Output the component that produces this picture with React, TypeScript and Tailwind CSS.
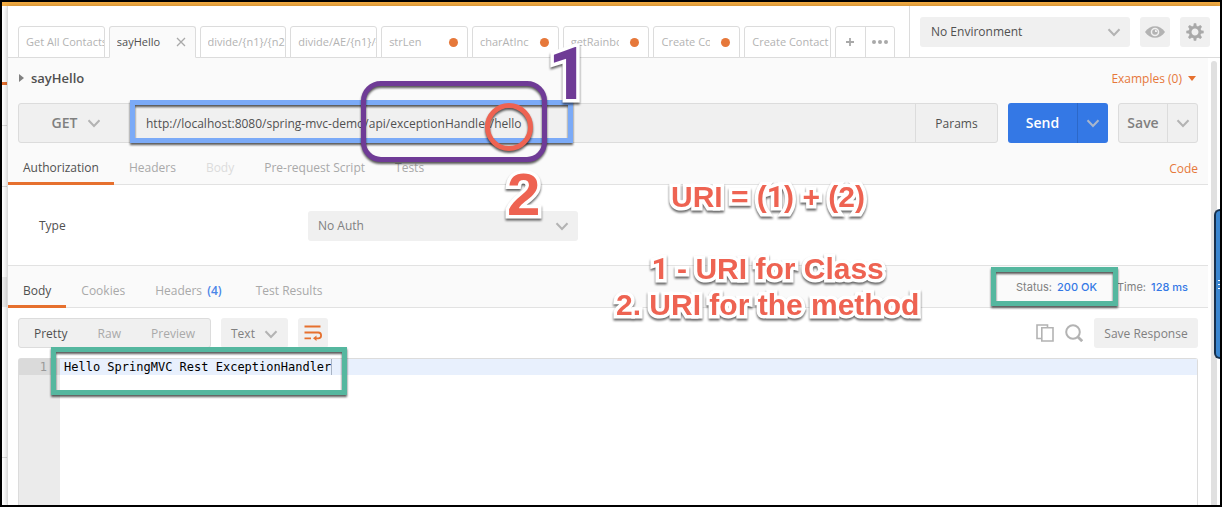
import type { ReactNode } from "react";

type RequestTab = { title: string; state?: "active" | "unsaved" };

const requestTabs: RequestTab[] = [
  { title: "Get All Contacts" },
  { title: "sayHello", state: "active" },
  { title: "divide/{n1}/{n2}" },
  { title: "divide/AE/{n1}/{n2}" },
  { title: "strLen", state: "unsaved" },
  { title: "charAtIncludes", state: "unsaved" },
  { title: "getRainbow", state: "unsaved" },
  { title: "Create Contact", state: "unsaved" },
  { title: "Create Contact" },
];

function Chevron({ className = "" }: { className?: string }) {
  return (
    <svg viewBox="0 0 14 9" className={`h-[9px] w-[14px] shrink-0 fill-none ${className}`} stroke="currentColor" strokeWidth="2" aria-hidden="true">
      <path d="M1.5 1.2 7 7l5.500-5.800" />
    </svg>
  );
}

function EyeIcon() {
  return (
    <svg viewBox="0 0 20 12" className="h-3 w-5" aria-hidden="true">
      <path d="M0 6C2.500 2.200 6 .2 10 .2S17.500 2.200 20 6c-2.500 3.800-6 5.800-10 5.800S2.500 9.800 0 6Z" fill="#b3b3b3" />
      <circle cx="10" cy="6" r="4.300" fill="#f0f0f0" />
      <circle cx="10" cy="6" r="2.800" fill="#b3b3b3" />
      <path d="M10 6V3.800A2.200 2.200 0 0 1 12.200 6Z" fill="#f0f0f0" />
    </svg>
  );
}

function GearIcon() {
  const teeth = [0, 45, 90, 135, 180, 225, 270, 315];
  return (
    <svg viewBox="-9 -9 18 18" className="size-[18px]" aria-hidden="true">
      <circle r="4.900" fill="none" stroke="#a9a9a9" strokeWidth="2.800" />
      {teeth.map((a) => (
        <path key={a} d="M-1.800-5.500-1.200-8.700H1.200L1.800-5.500Z" fill="#a9a9a9" transform={`rotate(${a})`} />
      ))}
    </svg>
  );
}

function TabItem({ title, state }: RequestTab) {
  const active = state === "active";
  return (
    <div
      className={`flex min-w-0 flex-1 items-center overflow-hidden rounded-t-[3px] border border-[#dcdcdc] pl-[7px] text-[11px] ${
        active ? "border-b-[#fafafa] bg-[#fafafa] text-[#505050]" : "bg-white text-[#b3b3b3]"
      }`}
    >
      <button type="button" className="min-w-0 flex-1 overflow-hidden text-left whitespace-nowrap">
        {title}
      </button>
      {active && (
        <button type="button" aria-label="Close tab" className="mr-[9px] ml-1">
          <svg viewBox="0 0 10 10" className="size-[10px]" stroke="#a9a9a9" strokeWidth="1.300" aria-hidden="true">
            <path d="m1 1 8 8M9 1 1 9" />
          </svg>
        </button>
      )}
      {state === "unsaved" && <span className="mr-[9px] ml-[11px] size-[9px] shrink-0 rounded-full bg-[#e6783a]" />}
    </div>
  );
}

function PanelTab({ children, active, faded }: { children: ReactNode; active?: boolean; faded?: boolean }) {
  return (
    <button
      type="button"
      className={`h-[42px] border-b-[3px] px-[15px] pt-[11px] text-xs ${
        active ? "border-[#e6702e] text-[#505050]" : faded ? "border-transparent text-[#dcdcdc]" : "border-transparent text-[#a9a9a9]"
      }`}
    >
      {children}
    </button>
  );
}

function Callout({ children, className }: { children: ReactNode; className: string }) {
  return (
    <div
      className={`pointer-events-none absolute text-center font-bold whitespace-nowrap drop-shadow-[0_2px_1px_rgba(0,0,0,0.6)] [-webkit-text-stroke:7px_white] [paint-order:stroke_fill] [stroke-linejoin:round] ${className}`}
    >
      {children}
    </div>
  );
}

export default function App() {
  return (
    <div className="relative flex min-h-screen flex-col overflow-hidden border-2 border-black bg-white font-['Open_Sans',sans-serif] text-xs text-[#505050]">
      <div className="h-1 shrink-0 bg-[#f5ad42]" />
      <div className="flex flex-1">
        {/* Edge of the collapsed sidebar */}
        <div className="flex w-[5px] shrink-0 flex-col">
          <div className="h-[79px] border-b-[3px] border-[#e6702e]" />
          <div className="h-[41px] border-b border-[#dcdcdc]" />
          <div className="h-[61px] border-b border-[#dcdcdc]" />
          <div className="mt-[90px] h-[30px] bg-[#ececec]" />
          <div className="h-[151px] border-b border-[#dcdcdc]" />
        </div>

        <div className="z-10 flex min-w-0 flex-1 flex-col border-l border-[#dcdcdc] bg-white shadow-[0_0_5px_rgba(0,0,0,0.25)]">
          <header className="flex h-[52px] shrink-0 border-b border-[#dcdcdc]">
            <nav className="-mb-px flex min-w-0 flex-1 gap-1 pt-5 pr-[14px] pl-[10px]">
              {requestTabs.map((t, i) => (
                <TabItem key={i} {...t} />
              ))}
              <div className="flex w-[60px] shrink-0 rounded-t-[3px] border border-[#dcdcdc]">
                <button type="button" aria-label="New tab" className="flex flex-1 items-center justify-center border-r border-[#dcdcdc]">
                  <svg viewBox="0 0 8 8" className="size-2" stroke="#a9a9a9" strokeWidth="1.800" aria-hidden="true">
                    <path d="M4 0v8M0 4h8" />
                  </svg>
                </button>
                <button type="button" aria-label="More tabs" className="flex flex-1 items-center justify-center gap-[2px]">
                  <span className="size-1 rounded-full bg-[#a9a9a9]" />
                  <span className="size-1 rounded-full bg-[#a9a9a9]" />
                  <span className="size-1 rounded-full bg-[#a9a9a9]" />
                </button>
              </div>
            </nav>
            <div className="flex w-[311px] shrink-0 items-start gap-[10px] border-l border-[#dcdcdc] pt-[11px] pr-[10px] pl-[10px]">
              <label className="relative flex h-[30px] flex-1 items-center">
                <span className="sr-only">Environment</span>
                <select className="size-full appearance-none rounded-[3px] bg-[#f0f0f0] px-[11px] text-xs text-[#505050]">
                  <option>No Environment</option>
                </select>
                <Chevron className="pointer-events-none absolute right-[9px] text-[#b3b3b3]" />
              </label>
              <button type="button" aria-label="Environment quick look" className="flex size-[30px] items-center justify-center rounded-[3px] bg-[#f0f0f0]">
                <EyeIcon />
              </button>
              <button type="button" aria-label="Manage environments" className="flex size-[30px] items-center justify-center rounded-[3px] bg-[#f0f0f0]">
                <GearIcon />
              </button>
            </div>
          </header>

          <div className="flex min-h-0 flex-1">
            <main className="flex min-w-0 flex-1 flex-col">
              <section className="border-b border-[#e2e2e2] bg-[#fafafa]">
                <div className="flex h-[45px] items-center justify-between pr-3 pb-1 pl-[11px]">
                  <h1 className="flex items-center gap-[7px] text-[13px] font-semibold">
                    <svg viewBox="0 0 5 8" className="h-2 w-[5px] fill-[#808080]" aria-hidden="true">
                      <path d="M0 0 5 4 0 8Z" />
                    </svg>
                    sayHello
                  </h1>
                  <button type="button" className="flex items-center gap-[6px] text-[#e6783a]">
                    Examples (0)
                    <svg viewBox="0 0 8 5" className="h-[5px] w-2 fill-[#e6702e]" aria-hidden="true">
                      <path d="M0 0H8L4 5Z" />
                    </svg>
                  </button>
                </div>
                <div className="flex h-10 gap-[10px] px-[10px]">
                  <div className="flex min-w-0 flex-1 overflow-hidden rounded-[3px] border border-[#dcdcdc] bg-[#f0f0f0]">
                    <button type="button" className="flex w-[112px] shrink-0 items-center justify-center gap-[10px] border-r border-[#dcdcdc] pl-1 text-sm font-semibold text-[#808080]">
                      GET
                      <Chevron className="text-[#b3b3b3]" />
                    </button>
                    <input
                      type="text"
                      aria-label="Request URL"
                      defaultValue="http://localhost:8080/spring-mvc-demo/api/exceptionHandler/hello"
                      className="min-w-0 flex-1 bg-transparent px-[15px] pt-[2px] text-xs text-[#505050] outline-none"
                    />
                    <button type="button" className="w-[82px] shrink-0 border-l border-[#dcdcdc] pt-[2px]">
                      Params
                    </button>
                  </div>
                  <div className="flex w-[100px] shrink-0 rounded-[3px] bg-[#3478e5] text-white">
                    <button type="button" className="flex-1 text-sm font-semibold">
                      Send
                    </button>
                    <button type="button" aria-label="Send options" className="flex w-[31px] items-center justify-center border-l border-[#2c68c8] text-[#a9b6cc]">
                      <Chevron className="w-3" />
                    </button>
                  </div>
                  <div className="flex w-20 shrink-0 rounded-[3px] border border-[#dcdcdc] bg-[#f0f0f0]">
                    <button type="button" className="flex-1 text-sm font-semibold text-[#808080]">
                      Save
                    </button>
                    <button type="button" aria-label="Save options" className="flex w-[30px] items-center justify-center border-l border-[#dcdcdc] text-[#b3b3b3]">
                      <Chevron className="w-3" />
                    </button>
                  </div>
                </div>
                <div className="flex items-end justify-between pr-[10px]">
                  <div className="-mb-px flex">
                    <PanelTab active>Authorization</PanelTab>
                    <PanelTab>Headers</PanelTab>
                    <PanelTab faded>Body</PanelTab>
                    <PanelTab>Pre-request Script</PanelTab>
                    <PanelTab>Tests</PanelTab>
                  </div>
                  <a href="#code" className="pb-[7px] text-[#e6783a]">
                    Code
                  </a>
                </div>
              </section>

              <section className="flex h-20 items-center pt-[2px] pl-[31px]">
                <label htmlFor="auth-type" className="w-[269px]">
                  Type
                </label>
                <div className="relative flex h-[30px] w-[270px] items-center">
                  <select id="auth-type" className="size-full appearance-none rounded-[3px] bg-[#f0f0f0] px-[10px] text-xs text-[#808080]">
                    <option>No Auth</option>
                  </select>
                  <Chevron className="pointer-events-none absolute right-[9px] text-[#b3b3b3]" />
                </div>
              </section>

              <section className="flex h-[43px] items-center justify-between border-y border-[#e2e2e2] bg-[#fafafa] pr-5">
                <div className="flex">
                  <PanelTab active>Body</PanelTab>
                  <PanelTab>Cookies</PanelTab>
                  <PanelTab>
                    Headers <span className="mr-1 ml-[2px] font-semibold text-[#4a86e8]">(4)</span>
                  </PanelTab>
                  <PanelTab>Test Results</PanelTab>
                </div>
                <div className="flex gap-5 pt-[2px] font-['Inter',sans-serif] text-[11px] text-[#808080]">
                  <span>
                    Status: <span className="ml-[2px] font-medium text-[#3478e5]">200 OK</span>
                  </span>
                  <span>
                    Time: <span className="ml-[2px] font-medium text-[#3478e5]">128 ms</span>
                  </span>
                </div>
              </section>

              <section className="flex flex-1 flex-col bg-white px-[10px] pt-[10px]">
                <div className="flex h-[30px] items-stretch gap-[10px]">
                  <div className="flex w-[193px] justify-between rounded-[3px] border border-[#dcdcdc] bg-[#f0f0f0] px-[15px] pt-[2px] text-[#a9a9a9]">
                    <button type="button" className="text-[#505050]">
                      Pretty
                    </button>
                    <button type="button">Raw</button>
                    <button type="button">Preview</button>
                  </div>
                  <button type="button" className="flex w-[67px] items-center justify-between rounded-[3px] bg-[#f0f0f0] px-[10px] pt-[2px] text-[#808080]">
                    Text
                    <Chevron className="text-[#b3b3b3]" />
                  </button>
                  <button type="button" aria-label="Wrap lines" className="flex w-[30px] items-center justify-center rounded-[3px] bg-[#f0f0f0]">
                    <svg viewBox="0 0 18 16" className="h-4 w-[18px] fill-none" stroke="#e6702e" strokeWidth="1.800" aria-hidden="true">
                      <path d="M.5 1.500h16M.5 7.500H14.200a2.900 2.900 0 0 1 0 5.800H11M.5 13.300H7" />
                      <path d="M12.500 10.600v5.400L9 13.300Z" fill="#e6702e" stroke="none" />
                    </svg>
                  </button>
                  <div className="ml-auto flex items-center gap-[11px]">
                    <button type="button" aria-label="Copy response">
                      <svg viewBox="0 0 18 18" className="block size-[18px] fill-none" stroke="#b3b3b3" strokeWidth="1.600" aria-hidden="true">
                        <path d="M5 14.500H1V1h10.500v2.500" />
                        <path d="M5.800 3.800H17V17H5.800Z" />
                      </svg>
                    </button>
                    <button type="button" aria-label="Search response">
                      <svg viewBox="0 0 18 18" className="block size-[18px] fill-none" stroke="#b3b3b3" strokeWidth="2" aria-hidden="true">
                        <circle cx="8" cy="8" r="6.800" />
                        <path d="m12.700 12.700 4.500 4.500" strokeWidth="2.800" />
                      </svg>
                    </button>
                    <button type="button" className="h-[30px] w-[104px] rounded-[3px] bg-[#f0f0f0] pt-[2px] text-[#808080]">
                      Save Response
                    </button>
                  </div>
                </div>

                <div className="mt-[10px] flex flex-1 rounded-t-[3px] border border-b-0 border-[#dcdcdc] font-['DejaVu_Sans_Mono',monospace] text-xs leading-4">
                  <div className="w-[41px] bg-[#ebebeb] text-right text-[#999999]">
                    <div className="bg-[#dadada] pr-[13px]">1</div>
                  </div>
                  <div className="flex-1 text-black">
                    <div className="flex bg-[#e8f0fd] pl-1">
                      Hello SpringMVC Rest ExceptionHandler
                      <span className="w-px bg-[#a9b4c4]" />
                    </div>
                  </div>
                </div>
              </section>
            </main>
            <div className="w-3 shrink-0 bg-white pt-[3px] pl-[3px]">
              <div className="h-full w-[6px] rounded-t-full bg-[#e0e0e0]" />
            </div>
          </div>
        </div>
      </div>

      <div className="absolute top-[207px] right-0 z-20 flex h-[150px] w-[6px] flex-col justify-center gap-[3px] rounded-l-[6px] border-2 border-r-0 border-[#16304d] bg-[#3a86d0] pl-[2px]">
        <span className="h-px bg-white" />
        <span className="h-px bg-white" />
        <span className="h-px bg-white" />
      </div>

      {/* Markup drawn over the request and the response */}
      <div className="pointer-events-none absolute inset-0 z-20 font-['Liberation_Sans',Arial,sans-serif]">
        <div className="absolute top-[98px] left-[128px] h-[43px] w-[443px] border-[5px] border-[#7baaf7] drop-shadow-[0_2px_1px_rgba(0,0,0,0.65)]" />
        <div className="absolute top-[79px] left-[359px] h-[81px] w-[186px] rounded-[20px] border-[5px] border-[#6f3b96] drop-shadow-[0_2px_1px_rgba(0,0,0,0.65)]" />
        <div className="absolute top-[101px] left-[483px] size-12 rounded-full border-[5px] border-[#ee6352] drop-shadow-[0_2px_1px_rgba(0,0,0,0.65)]" />
        <div className="absolute top-[265px] left-[989px] h-[39px] w-[127px] border-[5px] border-[#55b79f] drop-shadow-[0_2px_1px_rgba(0,0,0,0.65)]" />
        <div className="absolute top-[345px] left-[49px] h-12 w-[296px] border-[5px] border-[#55b79f] drop-shadow-[0_2px_1px_rgba(0,0,0,0.65)]" />
        <Callout className="top-[37px] left-[546px] font-['Roboto',sans-serif] text-[72px] leading-[72px] font-black text-[#6f3b96]">1</Callout>
        <Callout className="top-[163px] left-[505px] text-[60px] leading-[60px] text-[#ee6352]">2</Callout>
        <Callout className="top-[177px] left-[669px] text-[30px] leading-9 text-[#ee6352]">
          URI = (<span className="font-['Roboto',sans-serif]">1</span>) + (2)
        </Callout>
        <Callout className="top-[249px] left-[614px] text-[30px] leading-9 text-[#ee6352]">
          <span className="font-['Roboto',sans-serif]">1</span> - URI for Class
          <br />
          2. URI for the method
        </Callout>
      </div>
    </div>
  );
}
